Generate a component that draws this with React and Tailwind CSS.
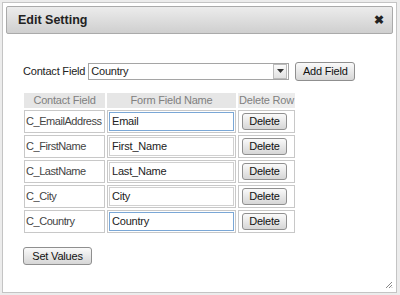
import React from 'react';

const rows = [
    { field: 'C_EmailAddress', name: 'Email', active: true },
    { field: 'C_FirstName', name: 'First_Name' },
    { field: 'C_LastName', name: 'Last_Name' },
    { field: 'C_City', name: 'City' },
    { field: 'C_Country', name: 'Country', active: true },
];

function GrayButton({ children, className = '' }) {
    return (
        <button
            className={`border border-[#8f8f8f] rounded-[3px] bg-gradient-to-b from-[#fafafa] to-[#d6d6d6] text-[11px] text-[#111] leading-none ${className}`}
        >
            {children}
        </button>
    );
}

export default function App() {
    return (
        <div className="w-[400px] h-[295px] bg-[#ececec] pt-[2px] pl-[2px] font-['Liberation_Sans',Arial,sans-serif]">
            <div className="w-[395px] h-[291px] border border-[#c4c4c4] bg-white p-[3px] flex flex-col">
                {/* title bar */}
                <div className="h-[28px] shrink-0 border border-[#aaa] rounded-[2px] bg-gradient-to-b from-[#ececec] to-[#cfcfcf] flex items-center justify-between pl-[11px] pr-[8px]">
                    <span className="text-[12.5px] font-bold text-[#222]">Edit Setting</span>
                    <span className="text-[12px] font-bold text-[#222] leading-none">✖</span>
                </div>

                {/* body */}
                <div className="relative flex-1 pl-[17px] pt-[28px] tracking-[-0.2px]">
                    <div className="flex items-center h-[18px]">
                        <span className="text-[11px] text-[#222] mr-[3px]">Contact Field</span>
                        <div className="w-[201px] h-[17px] border border-[#a5a5a5] flex items-center">
                            <span className="flex-1 text-[11px] text-[#222] pl-[2px]">Country</span>
                            <span className="w-[14px] h-[15px] mr-px border border-[#bbb] bg-gradient-to-b from-[#fafafa] to-[#e2e2e2] flex items-center justify-center">
                                <svg width="7" height="4" viewBox="0 0 7 4"><path d="M0 0h7L3.5 4z" fill="#333" /></svg>
                            </span>
                        </div>
                        <GrayButton className="ml-[6px] w-[60px] h-[19px]">Add Field</GrayButton>
                    </div>

                    <div className="mt-[13px] ml-[1px] grid grid-cols-[81px_129px_57px] gap-[2px] text-[11px]">
                        <div className="h-[15px] flex items-center justify-center text-[#808080] bg-[#e6e6e6]">Contact Field</div>
                        <div className="h-[15px] flex items-center justify-center text-[#808080] bg-[#e6e6e6]">Form Field Name</div>
                        <div className="h-[15px] flex items-center justify-center text-[#808080] bg-[#ececec]">Delete Row</div>
                        {rows.map(r => (
                            <React.Fragment key={r.field}>
                                <div className="h-[23px] border border-[#c8c8c8] flex items-center pl-[1px] text-[#444] tracking-[-0.45px] overflow-hidden whitespace-nowrap">{r.field}</div>
                                <div className="h-[23px] border border-[#c8c8c8] flex items-center pl-px">
                                    <div className={`w-[125px] h-[19px] border flex items-center pl-[2px] text-[#222] ${r.active ? 'border-[#7aa7d6]' : 'border-[#d0d0d0]'}`}>
                                        {r.name}
                                    </div>
                                </div>
                                <div className="h-[23px] border border-[#c8c8c8] flex items-center pl-[3px]">
                                    <GrayButton className="w-[45px] h-[17px]">Delete</GrayButton>
                                </div>
                            </React.Fragment>
                        ))}
                    </div>

                    <GrayButton className="mt-[14px] w-[69px] h-[18px]">Set Values</GrayButton>

                    <svg className="absolute right-[0px] bottom-[0px]" width="8" height="8" viewBox="0 0 8 8">
                        <path d="M7 1L1 7M7 4L4 7M7 6.5L6.5 7" stroke="#888" strokeWidth="1" />
                    </svg>
                </div>
            </div>
        </div>
    );
}
